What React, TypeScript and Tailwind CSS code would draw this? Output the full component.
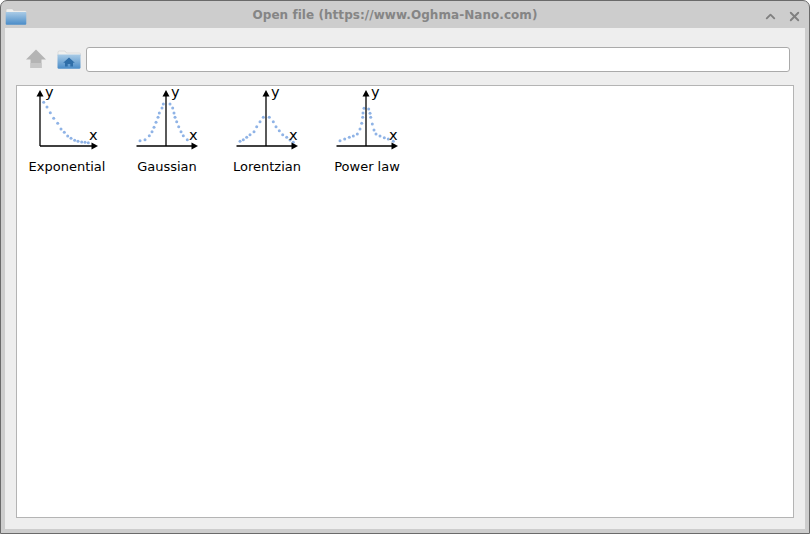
import { ChevronUp, X } from "lucide-react";

type Pt = [number, number];

const charts: { name: string; originX: number; dots: Pt[] }[] = [
  {
    name: "Exponential",
    originX: 5,
    dots: [
      [8.7, 16.3], [12, 21], [15.3, 26.7], [18.7, 32.3], [22.7, 37.3], [26, 43], [29.3, 46.3],
      [32.7, 50], [36, 52.3], [39.7, 54.3], [43, 55.3], [46.7, 56], [50, 56.3], [53.3, 56.7],
    ],
  },
  {
    name: "Gaussian",
    originX: 31,
    dots: [
      [5, 54.7], [10, 53.7], [14.3, 49.7], [17, 45.7], [19, 41.3], [21, 36.3], [23, 31.3], [24.3, 27],
      [27, 22], [28.3, 18], [35, 18], [37.7, 22], [39, 27], [40, 31.3], [41.7, 35.7], [43.7, 40.7],
      [46, 45.7], [48.3, 49.7], [52.3, 53.7],
    ],
  },
  {
    name: "Lorentzian",
    originX: 31,
    dots: [
      [5, 55.3], [8.3, 53.7], [11.7, 51.3], [15, 48.7], [19, 45.7], [21.7, 40.7], [25, 35.7], [28.3, 31.3],
      [34.3, 31.3], [38.3, 35.7], [41, 40.7], [44.3, 44.7], [47.7, 48.7], [51.7, 51.3], [55, 54], [58.3, 56.3],
    ],
  },
  {
    name: "Power law",
    originX: 31,
    dots: [
      [5, 54.7], [9.7, 53], [14.3, 51.3], [18.3, 50], [22.3, 48], [25, 43], [26.7, 37.3], [27.7, 31.3],
      [28, 27], [29, 22.3], [33.7, 23], [35, 27.3], [35.7, 31.3], [37.3, 38], [39, 44], [41, 48],
      [45, 50], [49.3, 51.7], [53.3, 53], [58.3, 55.3],
    ],
  },
];

function ChartIcon({ originX, dots }: { originX: number; dots: Pt[] }) {
  const startX = originX === 5 ? 5 : 1.5;
  return (
    <svg width="64" height="64" viewBox="0 0 64 64" className="block overflow-visible">
      {dots.map((d, i) => (
        <circle key={i} cx={d[0]} cy={d[1]} r="1.5" fill="#8fb3e6" />
      ))}
      <path d={`M${originX} 60V9M${startX} 60H58`} stroke="#000" strokeWidth="1.3" fill="none" />
      <polygon points={`${originX},4 ${originX - 3.5},10.500 ${originX + 3.5},10.500`} fill="#000" />
      <polygon points="63,60 56.500,56.500 56.500,63.500" fill="#000" />
      <text x={originX + 5} y="10.5" fontSize="14.5" fontFamily="'DejaVu Sans', sans-serif">y</text>
      <text x="54" y="53.5" fontSize="14.5" fontFamily="'DejaVu Sans', sans-serif">x</text>
    </svg>
  );
}

function Folder({ w, h, home }: { w: number; h: number; home?: boolean }) {
  return (
    <svg width={w} height={h} viewBox="0 0 24 19" className="block">
      <defs>
        <linearGradient id={home ? "fh" : "ft"} x1="0" y1="0" x2="0" y2="1">
          <stop offset="0" stopColor="#a9cbe6" />
          <stop offset="1" stopColor="#4a8cc8" />
        </linearGradient>
      </defs>
      <path d="M1 4V2.2C1 1.5 1.5 1 2.2 1H8L9.5 3H22.5C23.2 3 23.6 3.5 23.6 4V6H1Z" fill="#f0f0ee" stroke="#c8c8c8" strokeWidth="0.5" />
      <path d="M.5 4.5H23.500V17.6C23.500 18.3 23.1 18.7 22.5 18.7H1.5C.9 18.7 .5 18.300 .5 17.6Z" fill={`url(#${home ? "fh" : "ft"})`} />
      {home && <path d="M12 7.500L17.800 12.800H16V16.500H13.300V14H10.700V16.500H8V12.800H6.200Z" fill="#2f6ea8" />}
    </svg>
  );
}

export default function App() {
  return (
    <div className="w-[810px] h-[534px] flex flex-col bg-[#cdcdcd] border border-[#6a6a6a] rounded-t-[7px] overflow-hidden font-['DejaVu_Sans',sans-serif]">
      <div className="h-[27px] shrink-0 flex items-center pl-1 pr-[7px]">
        <div className="mt-[3px]">
          <Folder w={22} h={17} />
        </div>
        <div className="flex-1 text-center text-[12px] font-bold text-[#858585] mt-[1px] tracking-[0.05px]">
          Open file (https://www.Oghma-Nano.com)
        </div>
        <div className="flex items-center gap-[9px] mt-[3px]">
          <ChevronUp size={15} strokeWidth={3} className="text-[#808080]" />
          <X size={15} strokeWidth={3} className="text-[#808080]" />
        </div>
      </div>
      <div className="flex-1 mx-1 mb-1 bg-[#eeeeee] flex flex-col pt-[19px] px-[11px] pb-[11px] min-h-0">
        <div className="h-[25px] flex items-center shrink-0 pr-1">
          <svg width="20" height="20" viewBox="0 0 20 20" className="ml-[10px] mb-[2px] shrink-0 block">
            <path d="M10 .5L20 10.500H15.500V19H4.500V10.500H0Z" fill="#b4b4b4" />
            <path d="M4.500 14H15.500V19H4.500Z" fill="#c6c6c6" />
          </svg>
          <div className="ml-[11px] shrink-0">
            <Folder w={24} h={19} home />
          </div>
          <input
            className="ml-[5px] flex-1 h-[25px] bg-white border border-[#aaaaaa] rounded-[3px] outline-none"
            readOnly
          />
        </div>
        <div className="mt-[13px] flex-1 min-h-0 bg-white border border-[#b4b4b4] flex items-start">
          {charts.map((c) => (
            <div key={c.name} className="w-[100px] flex flex-col items-center">
              <ChartIcon originX={c.originX} dots={c.dots} />
              <div className="mt-[7px] h-5 leading-5 text-[13px] text-black whitespace-nowrap">{c.name}</div>
            </div>
          ))}
        </div>
      </div>
    </div>
  );
}
